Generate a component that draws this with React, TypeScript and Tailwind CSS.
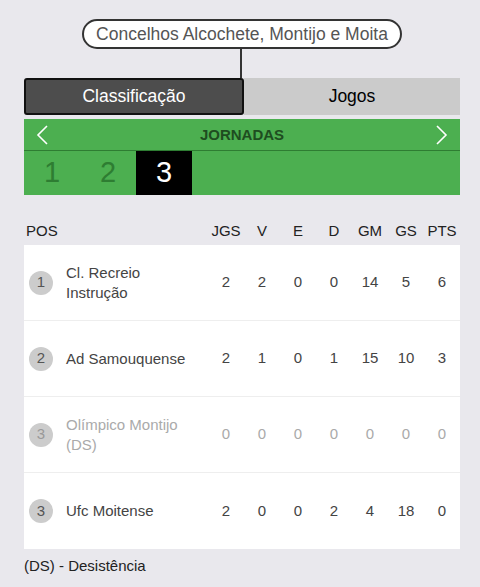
import { useState } from "react";

interface Row {
  pos: number;
  name: string;
  stats: number[];
  withdrawn?: boolean;
}

const rows: Row[] = [
  { pos: 1, name: "Cl. Recreio Instrução", stats: [2, 2, 0, 0, 14, 5, 6] },
  { pos: 2, name: "Ad Samouquense", stats: [2, 1, 0, 1, 15, 10, 3] },
  { pos: 3, name: "Olímpico Montijo (DS)", stats: [0, 0, 0, 0, 0, 0, 0], withdrawn: true },
  { pos: 3, name: "Ufc Moitense", stats: [2, 0, 0, 2, 4, 18, 0] },
];

const headers = ["JGS", "V", "E", "D", "GM", "GS", "PTS"];

function Chevron({ dir }: { dir: "left" | "right" }) {
  return (
    <svg width="14" height="22" viewBox="0 0 14 22" fill="none">
      <path
        d={dir === "left" ? "M12 2 L3 11 L12 20" : "M2 2 L11 11 L2 20"}
        stroke="white"
        strokeWidth="1.6"
      />
    </svg>
  );
}

export default function App() {
  const [tab, setTab] = useState<"class" | "jogos">("class");
  const [round, setRound] = useState(3);

  return (
    <div className="w-[480px] h-[587px] bg-[#e9e8ed] pl-6 pr-5 pt-[19px] font-['Liberation_Sans',Arial,sans-serif] overflow-hidden">
      {/* Title pill */}
      <div className="flex flex-col items-center">
        <div className="h-[30px] w-[320px] rounded-full border-2 border-[#333] bg-white flex items-center justify-center text-[17.5px] text-[#555]">
          Concelhos Alcochete, Montijo e Moita
        </div>
        <div className="w-[2px] h-[29px] bg-[#333] -ml-[2px]" />
      </div>

      {/* Tabs */}
      <div className="flex h-[37px]">
        <button
          onClick={() => setTab("class")}
          className={`flex-1 rounded-[3px] text-[17.5px] ${
            tab === "class"
              ? "bg-[#4d4d4d] border-2 border-[#111] text-white"
              : "bg-[#cbcbcb] text-black"
          }`}
        >
          Classificação
        </button>
        <button
          onClick={() => setTab("jogos")}
          className={`flex-1 text-[17.5px] ${
            tab === "jogos"
              ? "bg-[#4d4d4d] border-2 border-[#111] rounded-[3px] text-white"
              : "bg-[#cbcbcb] text-black"
          }`}
        >
          Jogos
        </button>
      </div>

      {/* Rounds */}
      <div className="mt-[4px] bg-[#4caf50]">
        <div className="h-[32px] flex items-center justify-between px-[11px] border-b border-[#2e7d32]">
          <Chevron dir="left" />
          <span className="text-[15px] font-bold text-[#1e4d20] mt-[2px]">JORNADAS</span>
          <Chevron dir="right" />
        </div>
        <div className="flex h-[44px]">
          {[1, 2, 3].map((n) => (
            <button
              key={n}
              onClick={() => setRound(n)}
              className={`w-[56px] text-[29px] ${
                round === n ? "bg-black text-white" : "text-[#2e7d32]"
              }`}
            >
              {n}
            </button>
          ))}
        </div>
      </div>

      {/* Table header */}
      <div className="mt-[24px] mb-[2px] grid grid-cols-[42px_1fr_repeat(7,36px)] text-[15px] text-[#222] h-[24px] items-center">
        <span className="pl-[2px]">POS</span>
        <span />
        {headers.map((h) => (
          <span key={h} className="text-center">
            {h}
          </span>
        ))}
      </div>

      {/* Table body */}
      <div className="bg-white">
        {rows.map((r, i) => (
          <div
            key={i}
            className={`grid grid-cols-[42px_1fr_repeat(7,36px)] items-center h-[76px] text-[15px] ${
              i < rows.length - 1 ? "border-b border-[#eeeeee]" : ""
            } ${r.withdrawn ? "text-[#aaaaaa]" : "text-[#444]"}`}
          >
            <div className="pl-[5px]">
              <div
                className={`w-[24px] h-[24px] rounded-full bg-[#cccccc] flex items-center justify-center text-[15px] ${
                  r.withdrawn ? "text-[#999]" : "text-[#555]"
                }`}
              >
                {r.pos}
              </div>
            </div>
            <div className="leading-[20px] pr-2">{r.name}</div>
            {r.stats.map((s, j) => (
              <span key={j} className="text-center">
                {s}
              </span>
            ))}
          </div>
        ))}
      </div>

      <div className="mt-[6px] text-[15px] text-[#222]">(DS) - Desistência</div>
    </div>
  );
}
